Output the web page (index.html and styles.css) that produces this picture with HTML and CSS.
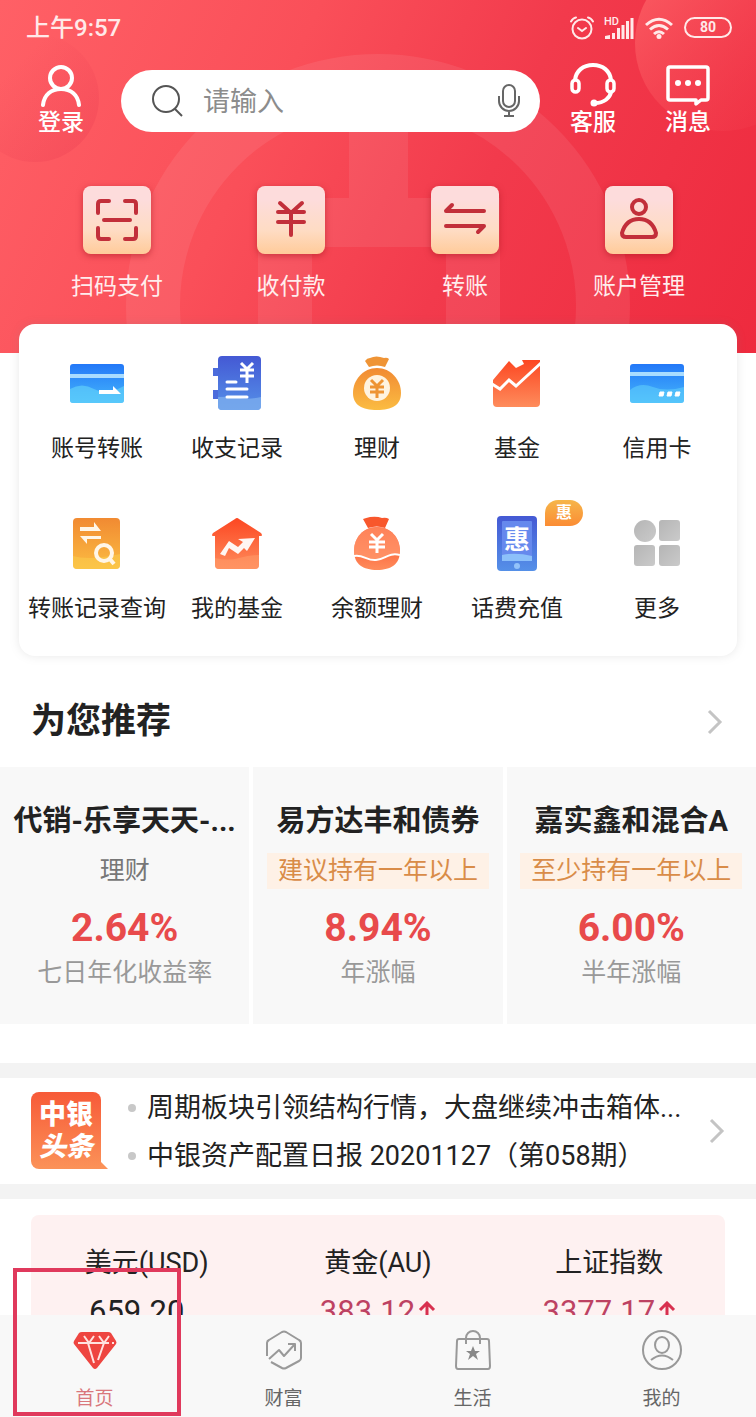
FILE: index.html
```html
<!DOCTYPE html>
<html lang="zh-CN">
<head>
    <meta charset="UTF-8">
    <meta name="viewport" content="width=device-width, initial-scale=1.0">
    <title>手机银行</title>
    <link rel="stylesheet" href="styles.css">
</head>
<body>
    <div class="app">
        <main class="content">
            <header class="hero">
                <svg class="hero-bg" viewBox="0 0 756 353" preserveAspectRatio="xMidYMin slice" aria-hidden="true">
                    <defs>
                        <linearGradient id="bubble" x1="0" y1="0" x2="1" y2="1">
                            <stop offset="0" stop-color="#ff6a6c" stop-opacity=".8"/>
                            <stop offset="1" stop-color="#f23a4c" stop-opacity=".1"/>
                        </linearGradient>
                        <linearGradient id="bubble2" x1="0" y1="0" x2="1" y2="1">
                            <stop offset=".3" stop-color="#e83a50" stop-opacity="0"/>
                            <stop offset="1" stop-color="#e83a50" stop-opacity=".35"/>
                        </linearGradient>
                    </defs>
                    <circle cx="35" cy="98" r="64" fill="url(#bubble2)"/>
                    <circle cx="723" cy="43" r="88" fill="url(#bubble)"/>
                    <circle cx="378" cy="306" r="225" fill="none" stroke="#fff" stroke-opacity=".08" stroke-width="54"/>
                    <path d="M349 110h59v88h92v155h-54V247H312v106h-54V198h91z" fill="#fff" fill-opacity=".08"/>
                </svg>

                <div class="status">
                    <span class="time">上午9:57</span>
                    <div class="status-icons">
                        <svg width="24" height="24" viewBox="0 0 24 24" fill="none" stroke="#ffe9e9" stroke-width="2" stroke-linecap="round">
                            <circle cx="12" cy="13" r="9.5"/>
                            <path d="M8 12l4 3 4-3M1 5.500Q3 2 6 1.500M23 5.500Q21 2 18 1.500"/>
                        </svg>
                        <svg class="signal" width="30" height="24" viewBox="0 0 30 24" fill="#ffe9e9">
                            <text x="0" y="9" font-size="11">HD</text>
                            <path d="M1 23v-3l5-1v4zM8 17h3v6H8zM13 12h3v11h-3zM17.500 9h3v14h-3zM22 5h3v18h-3zM26.500 2h3v21h-3z"/>
                        </svg>
                        <svg width="30" height="24" viewBox="0 0 30 24" fill="none" stroke="#ffe9e9" stroke-width="3">
                            <path d="M2 9q13-11.500 26 0M6 13.500q9-8 18 0M10 18q5-4.500 10 0"/>
                            <circle cx="15" cy="20.500" r="2.500" fill="#ffe9e9" stroke="none"/>
                        </svg>
                        <span class="battery">80</span>
                    </div>
                </div>

                <div class="topbar">
                    <a class="top-link" href="#">
                        <svg width="46" height="44" viewBox="0 0 46 44" fill="none" stroke="#fff" stroke-width="4" stroke-linecap="round">
                            <circle cx="23" cy="15" r="11"/>
                            <path d="M5 42c1-10 8-16 18-16s17 6 18 16"/>
                        </svg>
                        <span>登录</span>
                    </a>
                    <div class="search">
                        <svg width="34" height="34" viewBox="0 0 34 34" fill="none" stroke="#555" stroke-width="2">
                            <circle cx="16" cy="15" r="13"/>
                            <path d="M25 25l7 7"/>
                        </svg>
                        <input type="text" placeholder="请输入" aria-label="搜索">
                        <button type="button" aria-label="语音输入">
                            <svg width="22" height="34" viewBox="0 0 22 34" fill="none" stroke="#666" stroke-width="2">
                                <rect x="5" y="1" width="12" height="22" rx="6"/>
                                <path d="M1 12v5a10 10 0 0 0 20 0v-5M11 27v5M6 32h10"/>
                            </svg>
                        </button>
                    </div>
                    <a class="top-link" href="#">
                        <svg width="46" height="44" viewBox="0 0 46 44" fill="none" stroke="#fff" stroke-width="4">
                            <path d="M5 17C6 8 13 2 23 2s17 6 18 15M41 29c-1 6-7 11-16 11"/>
                            <rect x="2" y="17" width="7" height="12" rx="3.500" stroke-width="3.500"/>
                            <rect x="37" y="17" width="7" height="12" rx="3.500" stroke-width="3.500"/>
                            <circle cx="24" cy="40" r="3.500" fill="#fff" stroke="none"/>
                        </svg>
                        <span>客服</span>
                    </a>
                    <a class="top-link" href="#">
                        <svg width="46" height="44" viewBox="0 0 46 44" fill="none" stroke="#fff" stroke-width="3.500" stroke-linejoin="round">
                            <path d="M5 4h36q2 0 2 2v29q0 2-2 2h-5l-5 4v-4H5q-2 0-2-2V6q0-2 2-2z"/>
                            <g fill="#fff" stroke="none"><circle cx="13" cy="20" r="3"/><circle cx="23" cy="20" r="3"/><circle cx="33" cy="20" r="3"/></g>
                        </svg>
                        <span>消息</span>
                    </a>
                </div>

                <nav class="quick">
                    <a href="#">
                        <span class="quick-icon">
                            <svg width="68" height="68" viewBox="0 0 68 68"><path d="M15 27V18q0-3 3-3h8M42 15h8q3 0 3 3v9M53 42v8q0 3-3 3h-8M26 53h-8q-3 0-3-3v-8M21 34h26"/></svg>
                        </span>
                        扫码支付
                    </a>
                    <a href="#">
                        <span class="quick-icon">
                            <svg width="68" height="68" viewBox="0 0 68 68"><path d="M23 17l11 10 11-10M21 26h26M21 36h26M34 27v22"/></svg>
                        </span>
                        收付款
                    </a>
                    <a href="#">
                        <span class="quick-icon">
                            <svg width="68" height="68" viewBox="0 0 68 68"><path d="M53 25H15l6-6M15 40h38l-6 6"/></svg>
                        </span>
                        转账
                    </a>
                    <a href="#">
                        <span class="quick-icon">
                            <svg width="68" height="68" viewBox="0 0 68 68"><circle cx="34" cy="21" r="7"/><path d="M34 33c10 0 15 7 17 14q0 4-4 4H21q-4 0-4-4c2-7 7-14 17-14z"/></svg>
                        </span>
                        账户管理
                    </a>
                </nav>
            </header>

            <nav class="menu">
                <a href="#">
                    <svg width="56" height="56" viewBox="0 0 56 56">
                        <defs>
                            <linearGradient id="blue" x1="0" y1="0" x2="0" y2="1"><stop offset="0" stop-color="#2378f8"/><stop offset="1" stop-color="#45b6fb"/></linearGradient>
                            <linearGradient id="indigo" x1="0" y1="0" x2="0" y2="1"><stop offset="0" stop-color="#4459d4"/><stop offset="1" stop-color="#5590e8"/></linearGradient>
                            <linearGradient id="gold" x1="0" y1="0" x2="0" y2="1"><stop offset="0" stop-color="#f18a32"/><stop offset="1" stop-color="#fbbc42"/></linearGradient>
                            <linearGradient id="red" x1="0" y1="0" x2="0" y2="1"><stop offset="0" stop-color="#fc4722"/><stop offset="1" stop-color="#fe8c5c"/></linearGradient>
                            <linearGradient id="grey" x1="0" y1="0" x2="1" y2="1"><stop offset="0" stop-color="#b5b5b5"/><stop offset="1" stop-color="#cacaca"/></linearGradient>
                        </defs>
                        <rect x="1" y="8" width="54" height="39" rx="3" fill="url(#blue)"/>
                        <path d="M1 33q12-7 24 0t30-3v14q0 3-3 3H4q-3 0-3-3z" fill="#62d2fb" opacity=".65"/>
                        <path d="M1 18h54v4H1z" fill="#a9dcff"/>
                        <path d="M30 34h14v-4l8 8H30z" fill="#fff"/>
                    </svg>
                    账号转账
                </a>
                <a href="#">
                    <svg width="56" height="56" viewBox="0 0 56 56">
                        <path d="M4 12h6v8H4zM4 34h6v9H4z" fill="#4c6cdc"/>
                        <rect x="9" y="0" width="43" height="54" rx="4" fill="url(#indigo)"/>
                        <path d="M9 41q14-1 22 1t21-1v9q0 4-4 4H13q-4 0-4-4z" fill="#7cacee" opacity=".8"/>
                        <path d="M18 26h9M18 33h20M18 41h20" stroke="#fff" stroke-width="3" stroke-linecap="round"/>
                        <path d="M32 7l6 6 6-6M31 14h14M31 20h14M38 13v14" fill="none" stroke="#fff" stroke-width="3"/>
                    </svg>
                    收支记录
                </a>
                <a href="#">
                    <svg width="56" height="56" viewBox="0 0 56 56">
                        <path d="M16 5q2-3 5-3 6-3 14 0 3-1 5 1l-4 8q-8-3-16 0z" fill="#ef9436"/>
                        <path d="M28 12c14 0 24 12 24 25 0 12-9 17-24 17S4 49 4 37c0-13 10-25 24-25z" fill="url(#gold)"/>
                        <circle cx="28" cy="32" r="13" fill="#fff3df"/>
                        <path d="M22 24l6 6 6-6M21 31h14M21 36h14M28 30v12" fill="none" stroke="#ee9434" stroke-width="3"/>
                    </svg>
                    理财
                </a>
                <a href="#">
                    <svg width="56" height="56" viewBox="0 0 56 56">
                        <path d="M4 24L20 5l7 7 8-4-2-4h18v43q0 4-4 4H8q-4 0-4-4z" fill="url(#red)"/>
                        <path d="M3 28l8 5 9-9 7 6L52 7" fill="none" stroke="#fff" stroke-width="3"/>
                    </svg>
                    基金
                </a>
                <a href="#">
                    <svg width="56" height="56" viewBox="0 0 56 56">
                        <rect x="1" y="8" width="54" height="39" rx="3" fill="url(#blue)"/>
                        <path d="M1 34q10-8 23-3t31 0v13q0 3-3 3H4q-3 0-3-3z" fill="#62d2fb" opacity=".55"/>
                        <path d="M1 16h54v4H1z" fill="#a9dcff"/>
                        <path d="M31 36h4l-1 4h-4zM39 36h4l-1 4h-4zM47 36h4l-1 4h-4z" fill="#fff" stroke="#fff" stroke-linejoin="round"/>
                    </svg>
                    信用卡
                </a>
                <a href="#">
                    <svg width="56" height="56" viewBox="0 0 56 56">
                        <rect x="4" y="2" width="47" height="51" rx="4" fill="url(#gold)"/>
                        <path d="M4 40q16 5 47-2v11q0 4-4 4H8q-4 0-4-4z" fill="#fbd04e" opacity=".5"/>
                        <path d="M11 11h14V6l7 9H11zM32 20H11l7 8v-5h14z" fill="#fff6e8"/>
                        <circle cx="35" cy="37" r="8" fill="none" stroke="#fff6e8" stroke-width="4"/>
                        <path d="M40 42l5 6" stroke="#fff6e8" stroke-width="4"/>
                    </svg>
                    转账记录查询
                </a>
                <a href="#">
                    <svg width="56" height="56" viewBox="0 0 56 56">
                        <path d="M28 2q1 0 2 1l22 14q2 3 0 3h-2v29q0 4-4 4H10q-4 0-4-4V20H4q-2 0 0-3L26 3q1-1 2-1z" fill="url(#red)"/>
                        <path d="M6 42q14 3 24 0t20-3v10q0 4-4 4H10q-4 0-4-4z" fill="#ff9a68" opacity=".6"/>
                        <path d="M11 38l9-13 9 6 5-5-5-3 17-1-8 13-3-3-6 6-9-6-4 8z" fill="#fff6f2"/>
                    </svg>
                    我的基金
                </a>
                <a href="#">
                    <svg width="56" height="56" viewBox="0 0 56 56">
                        <path d="M14 3q3-1 7-2 7-1 12 1 4-1 7 1l-4 9q-8-3-17 0z" fill="#f8572c"/>
                        <path d="M28 11c14 0 23 11 23 24 0 13-9 19-23 19S5 48 5 35c0-13 9-24 23-24z" fill="url(#red)"/>
                        <path d="M28 11c14 0 23 11 23 24v3c-12-2-15 7-25 6-8 0-12-5-21-5v-4c0-13 9-24 23-24z" fill="#ff9b70" opacity=".7"/>
                        <path d="M5 40c9-2 13 5 22 4 9 0 12-8 24-5" fill="none" stroke="#fff" stroke-width="2"/>
                        <path d="M22 18l6 6 6-6M20 26h16M20 31h16M28 24v13" fill="none" stroke="#fff" stroke-width="3"/>
                    </svg>
                    余额理财
                </a>
                <a href="#">
                    <svg width="56" height="56" viewBox="0 0 56 56">
                        <rect x="8" y="0" width="40" height="55" rx="4" fill="url(#indigo)"/>
                        <rect x="13" y="5" width="30" height="40" rx="1" fill="#6689ed"/>
                        <path d="M13 39q14-3 30 1v5H13z" fill="#8cc0fa"/>
                        <text class="phone-text" x="28" y="33" font-size="26" text-anchor="middle">惠</text>
                        <circle cx="28" cy="50" r="3" fill="#93c3fa"/>
                    </svg>
                    话费充值
                    <span class="badge">惠</span>
                </a>
                <a href="#">
                    <svg width="56" height="56" viewBox="0 0 56 56" fill="url(#grey)">
                        <circle cx="16" cy="15" r="11"/>
                        <rect x="30" y="4" width="21" height="21" rx="3"/>
                        <rect x="5" y="29" width="21" height="21" rx="3"/>
                        <rect x="30" y="29" width="21" height="21" rx="3"/>
                    </svg>
                    更多
                </a>
            </nav>

            <section class="recommend">
                <div class="section-head">
                    <h2>为您推荐</h2>
                    <a href="#" aria-label="更多推荐">
                        <svg class="chevron" width="16" height="26" viewBox="0 0 16 26"><path d="M2 2l11 11L2 24"/></svg>
                    </a>
                </div>
                <div class="products">
                    <article class="product">
                        <h3>代销-乐享天天-...</h3>
                        <p class="kind">理财</p>
                        <p class="rate">2.64%</p>
                        <p class="note">七日年化收益率</p>
                    </article>
                    <article class="product">
                        <h3>易方达丰和债券</h3>
                        <p class="kind tag">建议持有一年以上</p>
                        <p class="rate">8.94%</p>
                        <p class="note">年涨幅</p>
                    </article>
                    <article class="product">
                        <h3>嘉实鑫和混合A</h3>
                        <p class="kind tag">至少持有一年以上</p>
                        <p class="rate">6.00%</p>
                        <p class="note">半年涨幅</p>
                    </article>
                </div>
            </section>

            <section class="news">
                <div class="news-logo">
                    <span>中银</span>
                    <em>头条</em>
                </div>
                <ul>
                    <li><a href="#">周期板块引领结构行情，大盘继续冲击箱体...</a></li>
                    <li><a href="#">中银资产配置日报 20201127（第058期）</a></li>
                </ul>
                <svg class="chevron" width="16" height="26" viewBox="0 0 16 26"><path d="M2 2l11 11L2 24"/></svg>
            </section>

            <section class="quotes">
                <div class="quote flat">
                    <p>美元(USD)</p>
                    <p class="value">659.20</p>
                </div>
                <div class="quote up">
                    <p>黄金(AU)</p>
                    <p class="value">383.12<svg width="18" height="22" viewBox="0 0 18 22"><path d="M9 22V2M2 9l7-7 7 7"/></svg></p>
                </div>
                <div class="quote up">
                    <p>上证指数</p>
                    <p class="value">3377.17<svg width="18" height="22" viewBox="0 0 18 22"><path d="M9 22V2M2 9l7-7 7 7"/></svg></p>
                </div>
            </section>
        </main>

        <nav class="tabbar">
            <a class="active" href="#">
                <svg width="44" height="40" viewBox="0 0 44 40">
                    <path d="M9 2h26q2 0 3 1l5 8q1 2 0 3L24 38q-2 2-4 0L1 14q-1-1 0-3l5-8q1-1 3-1z" fill="#ee4540"/>
                    <path d="M5 13h31M39 13h2M11 6l5 7 5-7M26 6l5 7 5-7M15 13l6 20M31 13l-6 17" fill="none" stroke="#ffe3e0" stroke-width="2"/>
                </svg>
                首页
            </a>
            <a href="#">
                <svg width="44" height="40" viewBox="0 0 44 40" fill="none" stroke="#999" stroke-width="2" stroke-linejoin="round">
                    <path d="M5 26V13q0-2 2-3L20 2q2-1 4 0l13 8q2 1 2 3v15q0 2-2 3L24 38q-2 1-4 0l-11-6"/>
                    <path d="M7 29l10-9 5 6 11-12M26 14h7v7"/>
                </svg>
                财富
            </a>
            <a href="#">
                <svg width="44" height="40" viewBox="0 0 44 40" fill="none" stroke="#999" stroke-width="2">
                    <path d="M8 9h28q2 0 2 2l1 25q0 3-2 3H7q-2 0-2-3l1-25q0-2 2-2zM15 14V8a7 7 0 0 1 14 0v6"/>
                    <path d="M22 16l2 5h5l-4 3 2 6-5-4-5 4 2-6-4-3h5z" fill="#888" stroke="none"/>
                </svg>
                生活
            </a>
            <a href="#">
                <svg width="44" height="40" viewBox="0 0 44 40" fill="none" stroke="#999" stroke-width="2">
                    <circle cx="22" cy="20" r="19"/>
                    <ellipse cx="22" cy="15" rx="7" ry="8"/>
                    <path d="M11 30q11-9 22 0"/>
                </svg>
                我的
            </a>
            <div class="highlight"></div>
        </nav>
    </div>
</body>
</html>
```
FILE: styles.css
```css
* {
    box-sizing: border-box;
}
body {
    margin: 0;
    font-family: Roboto, "Noto Sans CJK SC", sans-serif;
    color: #222;
    background: #fff;
}
a {
    color: inherit;
    text-decoration: none;
}
h2, h3, p, ul {
    margin: 0;
    padding: 0;
}
svg {
    display: block;
}
.app {
    display: flex;
    flex-direction: column;
    height: 100vh;
}
.content {
    flex: 1;
    min-height: 0;
    overflow-y: auto;
    scrollbar-width: none;
}

/* header */
.hero {
    position: relative;
    height: 353px;
    color: #fff;
    background: linear-gradient(115deg, #ff6066 0%, #fa4f59 35%, #f23a4c 62%, #ee2a3e 100%);
}
.hero-bg {
    position: absolute;
    top: 0;
    left: 0;
    width: 100%;
    height: 100%;
}
.status, .topbar, .quick {
    position: relative;
    display: flex;
}
.status {
    justify-content: space-between;
    align-items: center;
    height: 55px;
    padding: 0 24px 0 26px;
}
.time {
    padding-bottom: 4px;
    font-size: 24px;
    font-weight: 500;
    color: #ffe9e9;
}
.status-icons {
    display: flex;
    align-items: center;
    gap: 10px;
}
.signal {
    font-weight: 500;
}
.battery {
    width: 48px;
    height: 21px;
    border: 2px solid #ffe9e9;
    border-radius: 11px;
    font-size: 14px;
    font-weight: 700;
    line-height: 17px;
    text-align: center;
    color: #ffe9e9;
}
.topbar {
    align-items: center;
    height: 92px;
    padding: 0 45px 0 38px;
}
.top-link {
    display: flex;
    flex-direction: column;
    align-items: center;
    font-size: 23px;
    font-weight: 500;
    line-height: 32px;
    white-space: nowrap;
}
.top-link + .top-link {
    margin-left: 49px;
}
.search {
    display: flex;
    flex: 1;
    align-items: center;
    min-width: 0;
    height: 62px;
    margin: 0 30px 0 37px;
    padding: 0 20px 0 29px;
    border-radius: 31px;
    background: #fff;
}
.search input {
    flex: 1;
    min-width: 0;
    padding: 2px 0 0 19px;
    border: 0;
    outline: 0;
    background: none;
    font: inherit;
    font-size: 27px;
}
.search input::placeholder {
    color: #8c8c8c;
}
.search button {
    padding: 0;
    border: 0;
    background: none;
    cursor: pointer;
}
.quick {
    padding: 39px 30px 0;
}
.quick a {
    display: flex;
    flex: 1;
    flex-direction: column;
    align-items: center;
    gap: 17px;
    font-size: 23px;
    line-height: 32px;
    color: #ffeded;
}
.quick-icon {
    border-radius: 8px;
    background: linear-gradient(#fddcdc 20%, #fedcc4 65%, #ffcb9a);
    box-shadow: 0 2px 6px rgba(160, 20, 30, 0.5);
}
.quick-icon svg {
    fill: none;
    stroke: #c22f3a;
    stroke-width: 4;
    stroke-linecap: round;
    stroke-linejoin: round;
}

/* menu card */
.menu {
    position: relative;
    display: grid;
    grid-template-columns: repeat(5, 1fr);
    row-gap: 51px;
    margin: -29px 19px 0;
    padding: 32px 10px 31px 8px;
    border-radius: 16px;
    background: #fff;
    box-shadow: 0 0 10px rgba(130, 130, 130, 0.18);
}
.menu a {
    position: relative;
    display: flex;
    flex-direction: column;
    align-items: center;
    gap: 21px;
    font-size: 23px;
    line-height: 32px;
    white-space: nowrap;
}
.phone-text {
    fill: #fff;
    font-weight: 700;
}
.badge {
    position: absolute;
    top: -16px;
    left: 98px;
    width: 38px;
    height: 26px;
    border-radius: 13px 13px 13px 0;
    background: linear-gradient(#f6b64a, #fb8c34);
    color: #fff;
    font-size: 16px;
    font-weight: 700;
    line-height: 26px;
    text-align: center;
}

/* recommend */
.section-head {
    display: flex;
    justify-content: space-between;
    align-items: center;
    padding: 42px 33px 21px 31px;
}
.section-head h2 {
    font-size: 35px;
    font-weight: 700;
    line-height: 48px;
}
.chevron {
    fill: none;
    stroke: #c4c4c4;
    stroke-width: 3;
}
.products {
    display: grid;
    grid-template-columns: repeat(3, 1fr);
    gap: 4px;
}
.product {
    display: flex;
    flex-direction: column;
    align-items: center;
    min-width: 0;
    padding: 34px 0 35px;
    background: #f8f8f8;
    white-space: nowrap;
}
.product h3 {
    font-size: 29px;
    font-weight: 700;
    line-height: 40px;
}
.kind {
    margin-top: 12px;
    padding: 0 11px;
    font-size: 25px;
    line-height: 36px;
    color: #777;
}
.tag {
    background: #fef1e6;
    color: #d98c48;
}
.rate {
    margin-top: 17px;
    font-size: 39px;
    font-weight: 700;
    line-height: 44px;
    color: #e84a4b;
}
.note {
    margin-top: 7px;
    font-size: 25px;
    line-height: 32px;
    color: #999;
}

/* news */
.news {
    display: flex;
    align-items: center;
    margin-top: 39px;
    padding: 3px 31px 4px;
    border-top: 15px solid #f3f3f3;
    border-bottom: 15px solid #f3f3f3;
}
.news-logo {
    position: relative;
    display: flex;
    flex-direction: column;
    align-items: center;
    width: 70px;
    height: 77px;
    padding-top: 7px;
    border-radius: 8px 8px 0 8px;
    background: linear-gradient(#f75a38, #fb9258);
    color: #fff;
    font-size: 27px;
    font-weight: 900;
    line-height: 32px;
}
.news-logo::after {
    content: "";
    position: absolute;
    right: -7px;
    bottom: 0;
    border-bottom: 7px solid #fb9258;
    border-right: 7px solid transparent;
}
.news ul {
    flex: 1;
    min-width: 0;
    margin-left: 27px;
    padding-top: 3px;
    list-style: none;
}
.news li {
    display: flex;
    align-items: center;
    gap: 11px;
    font-size: 27px;
    line-height: 48px;
    white-space: nowrap;
}
.news li::before {
    content: "";
    width: 8px;
    height: 8px;
    border-radius: 50%;
    background: #c8c8c8;
}

/* quotes */
.quotes {
    display: grid;
    grid-template-columns: repeat(3, 1fr);
    margin: 16px 31px 0;
    padding: 30px 0 20px;
    border-radius: 8px;
    background: #fef1f1;
    text-align: center;
    font-size: 27px;
    line-height: 36px;
}
.value {
    display: flex;
    justify-content: center;
    align-items: center;
    gap: 3px;
    margin-top: 11px;
    font-size: 31px;
    line-height: 40px;
}
.flat .value {
    padding-right: 20px;
}
.up .value {
    color: #bd4263;
}
.value svg {
    fill: none;
    stroke: #d8304f;
    stroke-width: 3;
}

/* bottom tabs */
.tabbar {
    position: relative;
    display: grid;
    grid-template-columns: repeat(4, 1fr);
    height: 102px;
    padding-top: 15px;
    background: #f8f8f8;
}
.tabbar a {
    display: flex;
    flex-direction: column;
    align-items: center;
    gap: 15px;
    font-size: 19px;
    line-height: 28px;
    color: #666;
}
.tabbar .active {
    color: #d9777c;
}
.highlight {
    position: absolute;
    top: -47px;
    left: 13px;
    bottom: 1px;
    width: 168px;
    border: 4px solid #e0395c;
    pointer-events: none;
}
```
